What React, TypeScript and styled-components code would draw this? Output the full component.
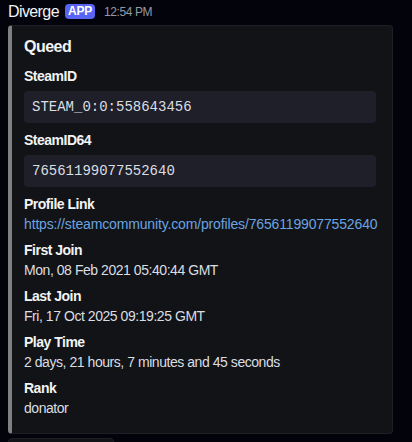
import React from "react";
import styled, { createGlobalStyle } from "styled-components";

const GlobalStyle = createGlobalStyle`
  html, body {
    margin: 0;
    padding: 0;
    background: #03030c;
  }
  body {
    font-family: "Liberation Sans", Arial, sans-serif;
    color: #dbdee1;
  }
`;

const Message = styled.div`
  padding: 0 8px;
  width: 412px;
  height: 442px;
  box-sizing: border-box;
  overflow: hidden;
`;

const Header = styled.div`
  display: flex;
  align-items: center;
  height: 27px;
  margin-top: -2px;
`;

const Author = styled.span`
  font-size: 16px;
  font-weight: 500;
  letter-spacing: -0.6px;
  color: #f2f3f5;
`;

const Badge = styled.span`
  margin-left: 6px;
  background: #5865f2;
  color: #fff;
  font-size: 12px;
  font-weight: 700;
  line-height: 15px;
  padding: 0 3px;
  letter-spacing: -0.2px;
  border-radius: 4px;
`;

const Time = styled.span`
  margin-left: 9px;
  font-size: 12px;
  letter-spacing: -0.4px;
  color: #949ba4;
`;

const Embed = styled.div`
  width: 385px;
  box-sizing: border-box;
  background: #121317;
  border: 1px solid #1e1f24;
  border-left: 4px solid #808080;
  border-radius: 4px;
  padding: 10px 16px 16px 12px;
`;

const Title = styled.div`
  font-size: 16px;
  font-weight: 700;
  line-height: 22px;
  letter-spacing: -0.5px;
  color: #f2f3f5;
`;

const Fields = styled.div`
  display: flex;
  flex-direction: column;
  gap: 8px;
  margin-top: 9px;
`;

const Field = styled.div`
  display: flex;
  flex-direction: column;
`;

const FieldName = styled.div`
  font-size: 14px;
  font-weight: 700;
  line-height: 18px;
  letter-spacing: -0.5px;
  color: #f2f3f5;
  margin-bottom: 2px;
`;

const FieldValue = styled.div`
  font-size: 14px;
  line-height: 18px;
  letter-spacing: -0.45px;
  color: #dbdee1;
`;

const Code = styled.div`
  margin-top: 4px;
  background: #1e1f29;
  border-radius: 4px;
  padding: 7px 8px;
  font-family: "Liberation Mono", "DejaVu Sans Mono", monospace;
  font-size: 14px;
  line-height: 18px;
  color: #dbdee1;
`;

const Link = styled.a`
  color: #6ba3e0;
  text-decoration: none;
  letter-spacing: -0.15px;
`;

const NextRow = styled.div`
  margin-top: 4px;
  width: 104px;
  height: 20px;
  background: #121317;
  border: 1px solid #1e1f24;
  border-radius: 4px;
`;

const fields: { name: string; value: React.ReactNode }[] = [
  { name: "First Join", value: "Mon, 08 Feb 2021 05:40:44 GMT" },
  { name: "Last Join", value: "Fri, 17 Oct 2025 09:19:25 GMT" },
  { name: "Play Time", value: "2 days, 21 hours, 7 minutes and 45 seconds" },
  { name: "Rank", value: "donator" },
];

export default function App() {
  return (
    <Message>
      <GlobalStyle />
      <Header>
        <Author>Diverge</Author>
        <Badge>APP</Badge>
        <Time>12:54 PM</Time>
      </Header>
      <Embed>
        <Title>Queed</Title>
        <Fields>
          <Field>
            <FieldName>SteamID</FieldName>
            <Code>STEAM_0:0:558643456</Code>
          </Field>
          <Field>
            <FieldName>SteamID64</FieldName>
            <Code>76561199077552640</Code>
          </Field>
          <Field>
            <FieldName>Profile Link</FieldName>
            <FieldValue>
              <Link href="#">https://steamcommunity.com/profiles/76561199077552640</Link>
            </FieldValue>
          </Field>
          {fields.map((f) => (
            <Field key={f.name}>
              <FieldName>{f.name}</FieldName>
              <FieldValue>{f.value}</FieldValue>
            </Field>
          ))}
        </Fields>
      </Embed>
      <NextRow />
    </Message>
  );
}
